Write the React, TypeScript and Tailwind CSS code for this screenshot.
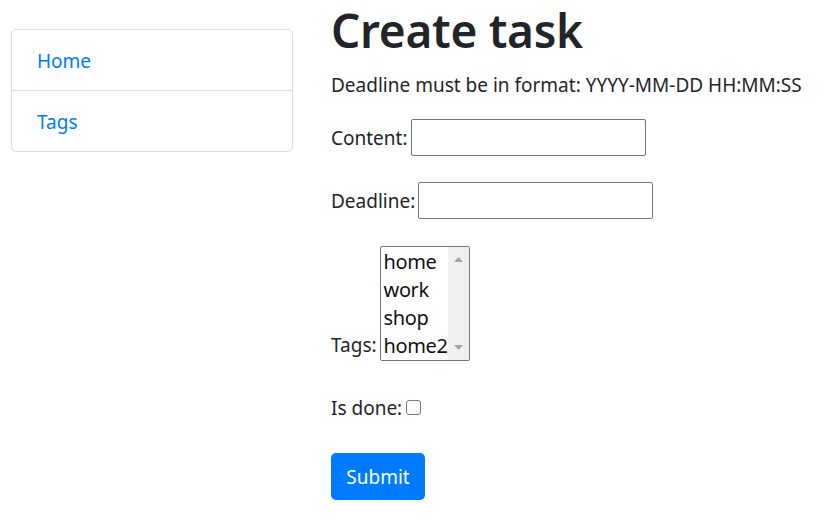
import React from "react";

const font = { fontFamily: '"Noto Sans", "Open Sans", sans-serif' };

function Field({ label }: { label: string }) {
  return (
    <div className="flex items-center h-[37px]">
      <span className="leading-[30px]">{label}</span>
      <div className="ml-[3px] h-[37px] w-[235px] border border-[#767676] rounded-[2px] bg-white" />
    </div>
  );
}

export default function App() {
  return (
    <div className="flex bg-white text-[#212529] text-[19px] leading-[30px] min-h-[532px]" style={font}>
      <div className="w-[282px] ml-[11px] mt-[29px] shrink-0 self-start">
        <div className="border border-[#dfdfdf] rounded-[5px] flex flex-col">
          <div className="h-[61px] px-[25px] pt-[2px] flex items-center text-[#007bff] border-b border-[#dfdfdf]">Home</div>
          <div className="h-[60px] px-[25px] pt-[2px] flex items-center text-[#007bff]">Tags</div>
        </div>
      </div>
      <div className="ml-[38px] flex flex-col">
        <h1 className="text-[46px] leading-[60px] font-semibold mb-[10px] tracking-[-0.3px]">Create task</h1>
        <p className="mb-[19px]">Deadline must be in format: YYYY-MM-DD HH:MM:SS</p>
        <div className="mb-[26px]">
          <Field label="Content:" />
        </div>
        <div className="mb-[27px]">
          <Field label="Deadline:" />
        </div>
        <div className="flex items-end mb-[32px]">
          <span className="leading-[30px] mb-[1px]">Tags:</span>
          <div className="ml-[3px] h-[115px] w-[90px] border border-[#767676] rounded-[2px] bg-white flex overflow-hidden">
            <div className="flex-1 flex flex-col pl-[3px] pt-[1px] leading-[28px] text-[20px] tracking-[-0.4px] text-[#111]">
              <span>home</span>
              <span>work</span>
              <span>shop</span>
              <span>home2</span>
            </div>
            <div className="w-[21px] bg-[#f0f0f0] flex flex-col items-center justify-between py-[10px]">
              <svg width="9" height="5" viewBox="0 0 9 5"><path d="M0 5 L4.5 0 L9 5 Z" fill="#a3a3a3" /></svg>
              <svg width="9" height="5" viewBox="0 0 9 5"><path d="M0 0 L4.5 5 L9 0 Z" fill="#a3a3a3" /></svg>
            </div>
          </div>
        </div>
        <div className="flex items-center h-[30px] mb-[30px]">
          <span>Is done:</span>
          <div className="ml-[4px] w-[15px] h-[15px] border border-[#767676] rounded-[3px] bg-white mb-[1px]" />
        </div>
        <div>
          <button className="h-[47px] w-[94px] bg-[#007bff] text-white rounded-[5px] leading-[30px] text-[19px]" style={font}>
            Submit
          </button>
        </div>
      </div>
    </div>
  );
}
